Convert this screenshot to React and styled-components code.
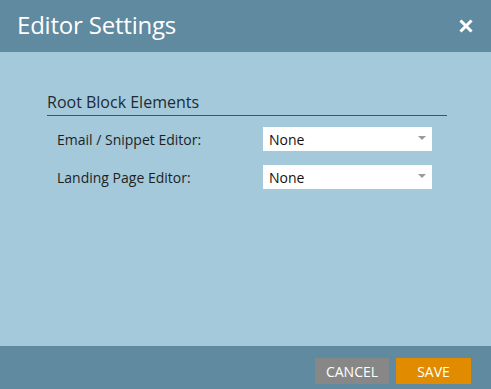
import React from "react";
import styled, { createGlobalStyle } from "styled-components";

const GlobalStyle = createGlobalStyle`
  html, body {
    margin: 0;
    padding: 0;
  }
  body {
    font-family: "Open Sans", "Liberation Sans", sans-serif;
  }
`;

const Dialog = styled.div`
  width: 491px;
  height: 389px;
  display: flex;
  flex-direction: column;
  background: #a3c9db;
`;

const Header = styled.div`
  height: 52px;
  flex: 0 0 52px;
  background: #5f8aa0;
  display: flex;
  align-items: center;
  justify-content: space-between;
  padding: 0 18px 0 17px;
  box-sizing: border-box;
`;

const Title = styled.h1`
  margin: 0;
  font-size: 24px;
  font-weight: 400;
  color: #ffffff;
  letter-spacing: -0.2px;
  line-height: 1;
  padding-bottom: 2px;
`;

const CloseButton = styled.button`
  border: 0;
  background: none;
  padding: 0;
  width: 14px;
  height: 14px;
  display: flex;
  cursor: pointer;
  margin-bottom: 1px;
`;

const Body = styled.div`
  flex: 1;
  padding: 40px 44px 0 47px;
`;

const Section = styled.div`
  width: 400px;
`;

const SectionTitle = styled.div`
  font-size: 16px;
  color: #1e2b33;
  line-height: 20px;
  padding-bottom: 3px;
  border-bottom: 1px solid #3f5560;
`;

const Rows = styled.div`
  padding: 11px 0 0 10px;
  display: flex;
  flex-direction: column;
  gap: 14px;
`;

const Row = styled.div`
  display: flex;
  align-items: center;
`;

const Label = styled.label`
  width: 206px;
  font-size: 14px;
  color: #1f1f1f;
`;

const Select = styled.div`
  width: 169px;
  height: 24px;
  background: #ffffff;
  box-sizing: border-box;
  display: flex;
  align-items: center;
  justify-content: space-between;
  padding: 0 6px 0 6px;
  font-size: 14px;
  color: #111;
`;

const Arrow = styled.span`
  width: 0;
  height: 0;
  border-left: 4px solid transparent;
  border-right: 4px solid transparent;
  border-top: 4px solid #9a9a9a;
  margin-top: -3px;
`;

const Footer = styled.div`
  height: 43px;
  flex: 0 0 43px;
  background: #5f8aa0;
  display: flex;
  justify-content: flex-end;
  align-items: flex-start;
  gap: 7px;
  padding: 12px 20px 0 0;
  box-sizing: border-box;
`;

const Button = styled.button`
  height: 26px;
  width: ${(p) => p.$width}px;
  border: 0;
  padding: 0;
  font-family: inherit;
  font-size: 14px;
  color: #ffffff;
  background: ${(p) => (p.$primary ? "#e08b00" : "#878787")};
  cursor: pointer;
`;

function SelectField({ value }) {
  return (
    <Select>
      <span>{value}</span>
      <Arrow />
    </Select>
  );
}

export default function App() {
  return (
    <>
      <GlobalStyle />
      <Dialog>
        <Header>
          <Title>Editor Settings</Title>
          <CloseButton aria-label="Close">
            <svg width="14" height="14" viewBox="0 0 14 14">
              <path
                d="M2.5 2.5 L11.5 11.5 M11.5 2.5 L2.5 11.5"
                stroke="#fff"
                strokeWidth="3"
                strokeLinecap="square"
              />
            </svg>
          </CloseButton>
        </Header>
        <Body>
          <Section>
            <SectionTitle>Root Block Elements</SectionTitle>
            <Rows>
              <Row>
                <Label>Email / Snippet Editor:</Label>
                <SelectField value="None" />
              </Row>
              <Row>
                <Label>Landing Page Editor:</Label>
                <SelectField value="None" />
              </Row>
            </Rows>
          </Section>
        </Body>
        <Footer>
          <Button $width={74}>CANCEL</Button>
          <Button $width={75} $primary>
            SAVE
          </Button>
        </Footer>
      </Dialog>
    </>
  );
}
